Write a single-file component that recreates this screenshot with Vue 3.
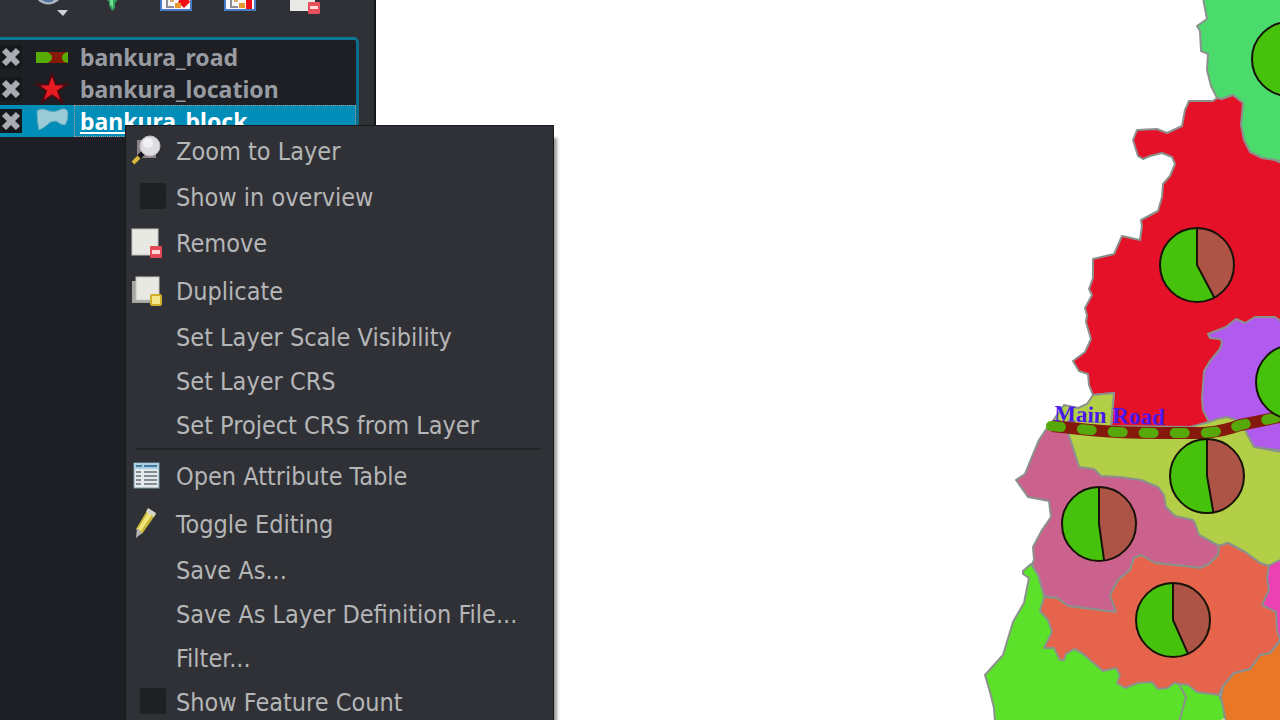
<script setup>
import { reactive, ref } from 'vue'

const layers = reactive([
  { name: 'bankura_road', kind: 'line', visible: true },
  { name: 'bankura_location', kind: 'point', visible: true },
  { name: 'bankura_block', kind: 'polygon', visible: true }
])
const selected = ref('bankura_block')

const menu = reactive([
  { label: 'Zoom to Layer', icon: 'zoom' },
  { label: 'Show in overview', check: true, on: false },
  { label: 'Remove', icon: 'remove' },
  { label: 'Duplicate', icon: 'duplicate' },
  { label: 'Set Layer Scale Visibility' },
  { label: 'Set Layer CRS' },
  { label: 'Set Project CRS from Layer' },
  { separator: true },
  { label: 'Open Attribute Table', icon: 'table' },
  { label: 'Toggle Editing', icon: 'pencil' },
  { label: 'Save As...' },
  { label: 'Save As Layer Definition File...' },
  { label: 'Filter...' },
  { label: 'Show Feature Count', check: true, on: false }
])

const blocks = [
  { fill: '#4bdb6c', points: '1203,-2 1207,19 1197,26 1200,31 1201,51 1208,54 1207,70 1211,86 1217,98 1222,99 1233,95 1243,103 1241,125 1244,140 1250,152 1262,158 1275,160 1300,166 1300,-2' },
  { fill: '#e51129', points: '1217,98 1213,101 1189,101 1185,110 1182,126 1167,133 1157,129 1137,130 1133,140 1138,156 1143,159 1150,156 1162,153 1172,157 1175,164 1170,176 1163,184 1162,197 1158,211 1141,220 1142,226 1140,240 1122,236 1114,254 1093,259 1093,278 1089,289 1092,295 1085,308 1087,315 1086,322 1091,339 1085,352 1073,361 1079,371 1088,374 1089,385 1093,395 1114,393 1111,430 1205,430 1320,400 1320,163 1281,163 1275,160 1262,158 1250,152 1244,140 1241,125 1243,103 1233,95 1222,99' },
  { fill: '#b05aee', points: '1320,322 1281,321 1275,317 1255,317 1245,323 1236,319 1226,327 1208,334 1210,338 1220,339 1222,342 1220,349 1210,361 1204,371 1202,398 1203,410 1209,422 1245,430 1254,447 1320,455' },
  { fill: '#b3ce47', points: '1050,425 1064,405 1078,408 1087,404 1093,395 1114,393 1111,426 1190,427 1209,422 1217,419 1227,417 1237,420 1244,427 1247,434 1254,447 1281,452 1320,460 1320,566 1268,566 1260,563 1245,552 1228,543 1219,546 1120,500 1079,467 1068,433' },
  { fill: '#cb628d', points: '1047,428 1039,440 1034,452 1025,474 1016,480 1028,497 1049,501 1051,517 1042,530 1033,547 1034,560 1032,564 1038,575 1044,596 1057,598 1068,606 1116,612 1110,595 1118,580 1130,570 1134,558 1141,555 1155,563 1185,566 1200,568 1209,564 1218,555 1219,546 1199,535 1195,523 1193,520 1175,516 1166,507 1164,495 1158,487 1141,480 1120,477 1101,476 1094,469 1079,467 1072,445 1068,433' },
  { fill: '#5ce12a', points: '1031,564 1023,571 1023,574 1029,578 1024,603 1013,622 1003,655 985,675 990,692 994,708 995,722 1225,722 1224,708 1219,695 1100,620 1044,596 1038,575' },
  { fill: '#ea42b3', points: '1268,566 1320,540 1320,650 1281,640 1255,605' },
  { fill: '#ea7726', points: '1320,610 1281,640 1270,653 1260,655 1250,669 1234,673 1223,686 1221,697 1224,712 1226,722 1320,722' },
  { fill: '#e5644b', points: '1044,597 1040,611 1048,620 1052,632 1044,648 1054,648 1060,660 1064,660 1066,654 1074,649 1082,653 1103,671 1116,668 1120,675 1117,683 1125,688 1138,683 1152,682 1158,689 1168,688 1174,683 1188,685 1197,692 1219,695 1223,686 1234,673 1250,669 1260,655 1270,653 1280,640 1277,630 1276,612 1262,605 1269,590 1267,578 1269,566 1260,563 1245,552 1228,543 1219,546 1218,555 1209,564 1200,568 1185,566 1155,563 1141,555 1134,558 1130,570 1118,580 1110,595 1116,612 1068,606 1057,598' }
]

const radius = 37
const pies = [
  { x: 1289, y: 59, angle: 150 },
  { x: 1197, y: 265, angle: 152 },
  { x: 1293, y: 382, angle: 154 },
  { x: 1207, y: 476, angle: 170 },
  { x: 1099, y: 524, angle: 172 },
  { x: 1173, y: 620, angle: 156 }
].map((p) => {
  const a = (p.angle * Math.PI) / 180
  return { ...p, ex: radius * Math.sin(a), ey: -radius * Math.cos(a) }
})
</script>

<template>
  <main class="window">
    <aside class="panel">
      <div class="toolbar">
        <button type="button" class="tool" aria-label="Manage layer visibility">
          <svg viewBox="0 0 32 24">
            <path d="M4-4Q16 12 29-4Z" fill="#cfd4dc" />
            <circle cx="16" cy="-5" r="8" fill="#5275a8" />
            <path d="M5-2Q16 9 28-2" fill="none" stroke="#aeb4bd" stroke-width="2" />
            <path d="M25 10H36L31 16Z" fill="#d0d0da" />
          </svg>
        </button>
        <button type="button" class="tool" aria-label="Filter legend">
          <svg viewBox="0 0 32 24">
            <path d="M8-3H24L19 3V8L16 11L13 5V2Z" fill="#2fa35b" />
            <path d="M14-3V4L17 8V-3Z" fill="#74dc91" />
          </svg>
        </button>
        <button type="button" class="tool" aria-label="Expand all">
          <svg viewBox="0 0 32 24">
            <rect x="1" y="-10" width="30" height="20" fill="#f7f7fb" stroke="#477bc5" stroke-width="2" />
            <path d="M7-6V7H14" fill="none" stroke="#8d8d91" stroke-width="2" />
            <rect x="10" y="-3" width="4" height="5" fill="#d4aa65" />
            <path d="M18 2L24-7L30 2L24 8Z" fill="#f20c16" />
            <rect x="15" y="3" width="6" height="5" fill="#e8962e" />
          </svg>
        </button>
        <button type="button" class="tool" aria-label="Collapse all">
          <svg viewBox="0 0 32 24">
            <rect x="1" y="-10" width="30" height="20" fill="#f7f7fb" stroke="#477bc5" stroke-width="2" />
            <path d="M7-6V7H14" fill="none" stroke="#8d8d91" stroke-width="2" />
            <rect x="10" y="-3" width="4" height="5" fill="#d4aa65" />
            <rect x="15" y="3" width="6" height="5" fill="#e8962e" />
            <rect x="22" y="-8" width="6" height="17" fill="#ed0d17" />
          </svg>
        </button>
        <button type="button" class="tool" aria-label="Remove layer">
          <svg viewBox="0 0 32 24">
            <rect x="2" y="-14" width="25" height="25" fill="#e9e9e5" />
            <rect x="20" y="2" width="12" height="12" rx="1" fill="#e7505b" />
            <rect x="22" y="6" width="8" height="3" fill="#ffd9dc" />
          </svg>
        </button>
      </div>

      <ul class="tree">
        <li v-for="layer in layers" :key="layer.name" class="layer" :class="{ selected: selected === layer.name }">
          <span class="tick">
            <input v-model="layer.visible" type="checkbox" :aria-label="layer.name" />
            <svg v-if="layer.visible" viewBox="0 0 22 22">
              <path d="M4 4L18 18M18 4L4 18" stroke="#a9abb2" stroke-width="6" />
            </svg>
          </span>
          <svg class="symbol" viewBox="0 0 36 32">
            <template v-if="layer.kind === 'line'">
              <rect x="2" y="11" width="32" height="11" fill="#851b08" />
              <path d="M2 11H13Q18 13 18 16.500Q18 20 13 22H2ZM34 11Q28 12 28 16.500Q28 21 34 22Z" fill="#58ad05" />
            </template>
            <path v-else-if="layer.kind === 'point'" d="M18 1L22 11.500H33L24 18L28 29L18 22.500L8 29L12 18L3 11.500H14Z" fill="#e81d24" stroke="#4b0a12" stroke-width="2" />
            <path v-else d="M3 6Q7 2 15 6Q21 8 28 4Q33 3 34 8Q34 16 31 20Q27 20 22 16Q16 16 13 20Q8 24 5 25Q3 18 3 6Z" fill="#9ccbd8" stroke="#5fa9bf" />
          </svg>
          <button type="button" class="name" @click="selected = layer.name">{{ layer.name }}</button>
        </li>
      </ul>
    </aside>

    <section class="canvas" aria-label="Map">
      <svg class="map" viewBox="376 0 904 720" preserveAspectRatio="xMinYMin slice">
        <polygon v-for="b in blocks" :key="b.fill" class="block" :points="b.points" :fill="b.fill" />
        <path class="boundary" d="M1179 684L1186 697L1183 708L1179 722" />
        <path d="M1218 721L1224 718L1226 721Z" fill="#d7d58d" />
        <path class="road" d="M1052 426L1090 430Q1120 433 1160 433H1204Q1225 431 1240 425L1290 415" />
        <path class="dashes" d="M1051 426L1090 430Q1120 433 1160 433H1204Q1225 431 1240 425L1290 415" />
        <text class="road-name" x="1054" y="421" transform="rotate(2 1054 421)">Main Road</text>
        <g v-for="p in pies" :key="p.x" :transform="`translate(${p.x} ${p.y})`">
          <circle :r="radius" fill="#46c20d" />
          <path :d="`M0 0V${-radius}A${radius} ${radius} 0 0 1 ${p.ex} ${p.ey}Z`" fill="#ad5446" />
          <path :d="`M0 ${-radius}V0L${p.ex} ${p.ey}`" class="slice" />
          <circle :r="radius" class="rim" />
        </g>
      </svg>
    </section>

    <div class="menu" role="menu">
      <template v-for="(item, i) in menu" :key="i">
        <hr v-if="item.separator" />
        <label v-else-if="item.check" class="item">
          <span class="slot"><input v-model="item.on" type="checkbox" class="box" /></span>
          {{ item.label }}
        </label>
        <button v-else type="button" role="menuitem" class="item" :class="{ tall: item.icon }">
          <span class="slot">
            <svg v-if="item.icon" viewBox="0 0 32 32" class="icon">
              <template v-if="item.icon === 'zoom'">
                <path d="M7 5H26V23H7Z" fill="#8b818d" />
                <path d="M3 28L11 20" stroke="#d9b83e" stroke-width="4" />
                <path d="M9 22L13 18" stroke="#17181a" stroke-width="5" />
                <circle cx="20" cy="11" r="10" fill="#dddce0" stroke="#c3bfc5" />
                <ellipse cx="18" cy="8" rx="5" ry="5" fill="#f3f1f4" />
              </template>
              <template v-else-if="item.icon === 'remove'">
                <rect x="2" y="2" width="26" height="26" fill="#e9e9e4" stroke="#c5c5c0" />
                <rect x="20" y="19" width="12" height="12" rx="1" fill="#e34a55" />
                <rect x="22" y="23" width="8" height="4" fill="#ffd5d8" />
              </template>
              <template v-else-if="item.icon === 'duplicate'">
                <rect x="2" y="6" width="24" height="22" fill="#a5a69e" />
                <rect x="6" y="2" width="23" height="23" fill="#e9e9e4" stroke="#c5c5c0" />
                <rect x="21" y="20" width="10" height="10" rx="1" fill="#f2e58a" stroke="#cfad27" stroke-width="2" />
              </template>
              <template v-else-if="item.icon === 'table'">
                <rect x="4" y="3" width="25" height="25" fill="#e4e9ec" stroke="#789bad" />
                <rect x="4" y="3" width="25" height="6" fill="#a9cfe2" />
                <path d="M6 6H12M14 6H27" stroke="#447b9b" stroke-width="2" />
                <path d="M6 12H11M14 12H27M6 16H11M14 16H27M6 20H11M14 20H27M6 24H11M14 24H27" stroke="#848e94" stroke-width="2" />
              </template>
              <template v-else>
                <path d="M18 1L26 6L12 26L6 21Z" fill="#c8b83b" />
                <path d="M19 3L23 5L11 23L8 21Z" fill="#f1e578" />
                <path d="M18 0L26 5L24 9L16 4Z" fill="#d6d5cb" />
                <path d="M7 20L12 25L6 30Z" fill="#b7b6b4" />
              </template>
            </svg>
          </span>
          {{ item.label }}
        </button>
      </template>
    </div>
  </main>
</template>

<style>
body {
  margin: 0;
  background: #fff;
}
</style>

<style scoped>
.window {
  position: relative;
  display: flex;
  height: 100vh;
  overflow: hidden;
  font-family: "DejaVu Sans Condensed", "DejaVu Sans", sans-serif;
}
button {
  margin: 0;
  padding: 0;
  border: 0;
  background: none;
  color: inherit;
  font: inherit;
  text-align: left;
}
.panel {
  display: flex;
  flex-direction: column;
  box-sizing: border-box;
  width: 376px;
  flex: none;
  padding-right: 15px;
  border-right: 2px solid #16171a;
  background: #303136;
}
.toolbar {
  display: flex;
  gap: 32px;
  height: 37px;
  padding-left: 32px;
}
.tool {
  width: 32px;
  height: 24px;
}
.tool svg {
  display: block;
  width: 32px;
  height: 24px;
  overflow: visible;
}
.tree {
  flex: 1;
  margin: 0;
  padding: 1px 0 0;
  list-style: none;
  border-top: 3px solid #0b7896;
  border-right: 3px solid #0b6f8b;
  border-radius: 0 5px 0 0;
  background: #1e1f24;
}
.layer {
  display: flex;
  align-items: center;
  height: 32px;
  color: #989ba1;
}
.selected {
  background: #008db7;
  color: #fff;
}
.tick {
  position: relative;
  width: 22px;
  height: 24px;
  margin-right: 12px;
  background: #17181b;
}
.tick input {
  appearance: none;
  display: block;
  width: 100%;
  height: 100%;
  margin: 0;
}
.tick svg {
  position: absolute;
  inset: 1px 0 0;
  width: 22px;
  height: 22px;
  pointer-events: none;
}
.symbol {
  width: 36px;
  height: 32px;
}
.name {
  flex: 1;
  box-sizing: border-box;
  height: 32px;
  margin-left: 4px;
  padding-left: 5px;
  border: 1px dotted transparent;
  font: bold 23px/30px "Noto Sans", "Open Sans", sans-serif;
}
.selected .name {
  border-color: #b39a94;
  text-decoration: underline;
}
.canvas {
  flex: 1;
  min-width: 0;
  background: #fff;
}
.map {
  display: block;
  width: 100%;
  height: 100%;
}
.block {
  stroke: #8b918c;
  stroke-width: 2;
  stroke-linejoin: round;
}
.boundary {
  fill: none;
  stroke: #8b918c;
  stroke-width: 2;
}
.road {
  fill: none;
  stroke: #85190b;
  stroke-width: 12;
}
.dashes {
  fill: none;
  stroke: #57a80b;
  stroke-width: 10;
  stroke-linecap: round;
  stroke-dasharray: 10 21;
}
.road-name {
  fill: #4a18ee;
  font: bold 23px "Liberation Serif", serif;
}
.slice,
.rim {
  fill: none;
  stroke: #171208;
  stroke-width: 2;
}
.menu {
  position: absolute;
  top: 125px;
  left: 125px;
  box-sizing: border-box;
  width: 429px;
  padding: 2px 0;
  border: 1px solid #18191c;
  background: #303136;
  box-shadow: 4px 12px 3px -1px rgba(0, 0, 0, 0.4);
  color: #b5b6b7;
}
.item {
  display: flex;
  align-items: center;
  width: 100%;
  height: 44px;
  font-size: 25px;
  line-height: 32px;
  white-space: nowrap;
}
.tall {
  height: 48px;
}
.slot {
  display: flex;
  flex: none;
  width: 50px;
}
.icon {
  width: 32px;
  height: 32px;
  margin: 0 0 2px 4px;
}
.box {
  appearance: none;
  width: 26px;
  height: 26px;
  margin: 0 0 4px 14px;
  border-radius: 2px;
  background: #1f2024;
}
.menu hr {
  height: 2px;
  margin: 0 12px 3px 10px;
  border: 0;
  background: #232428;
}
</style>
